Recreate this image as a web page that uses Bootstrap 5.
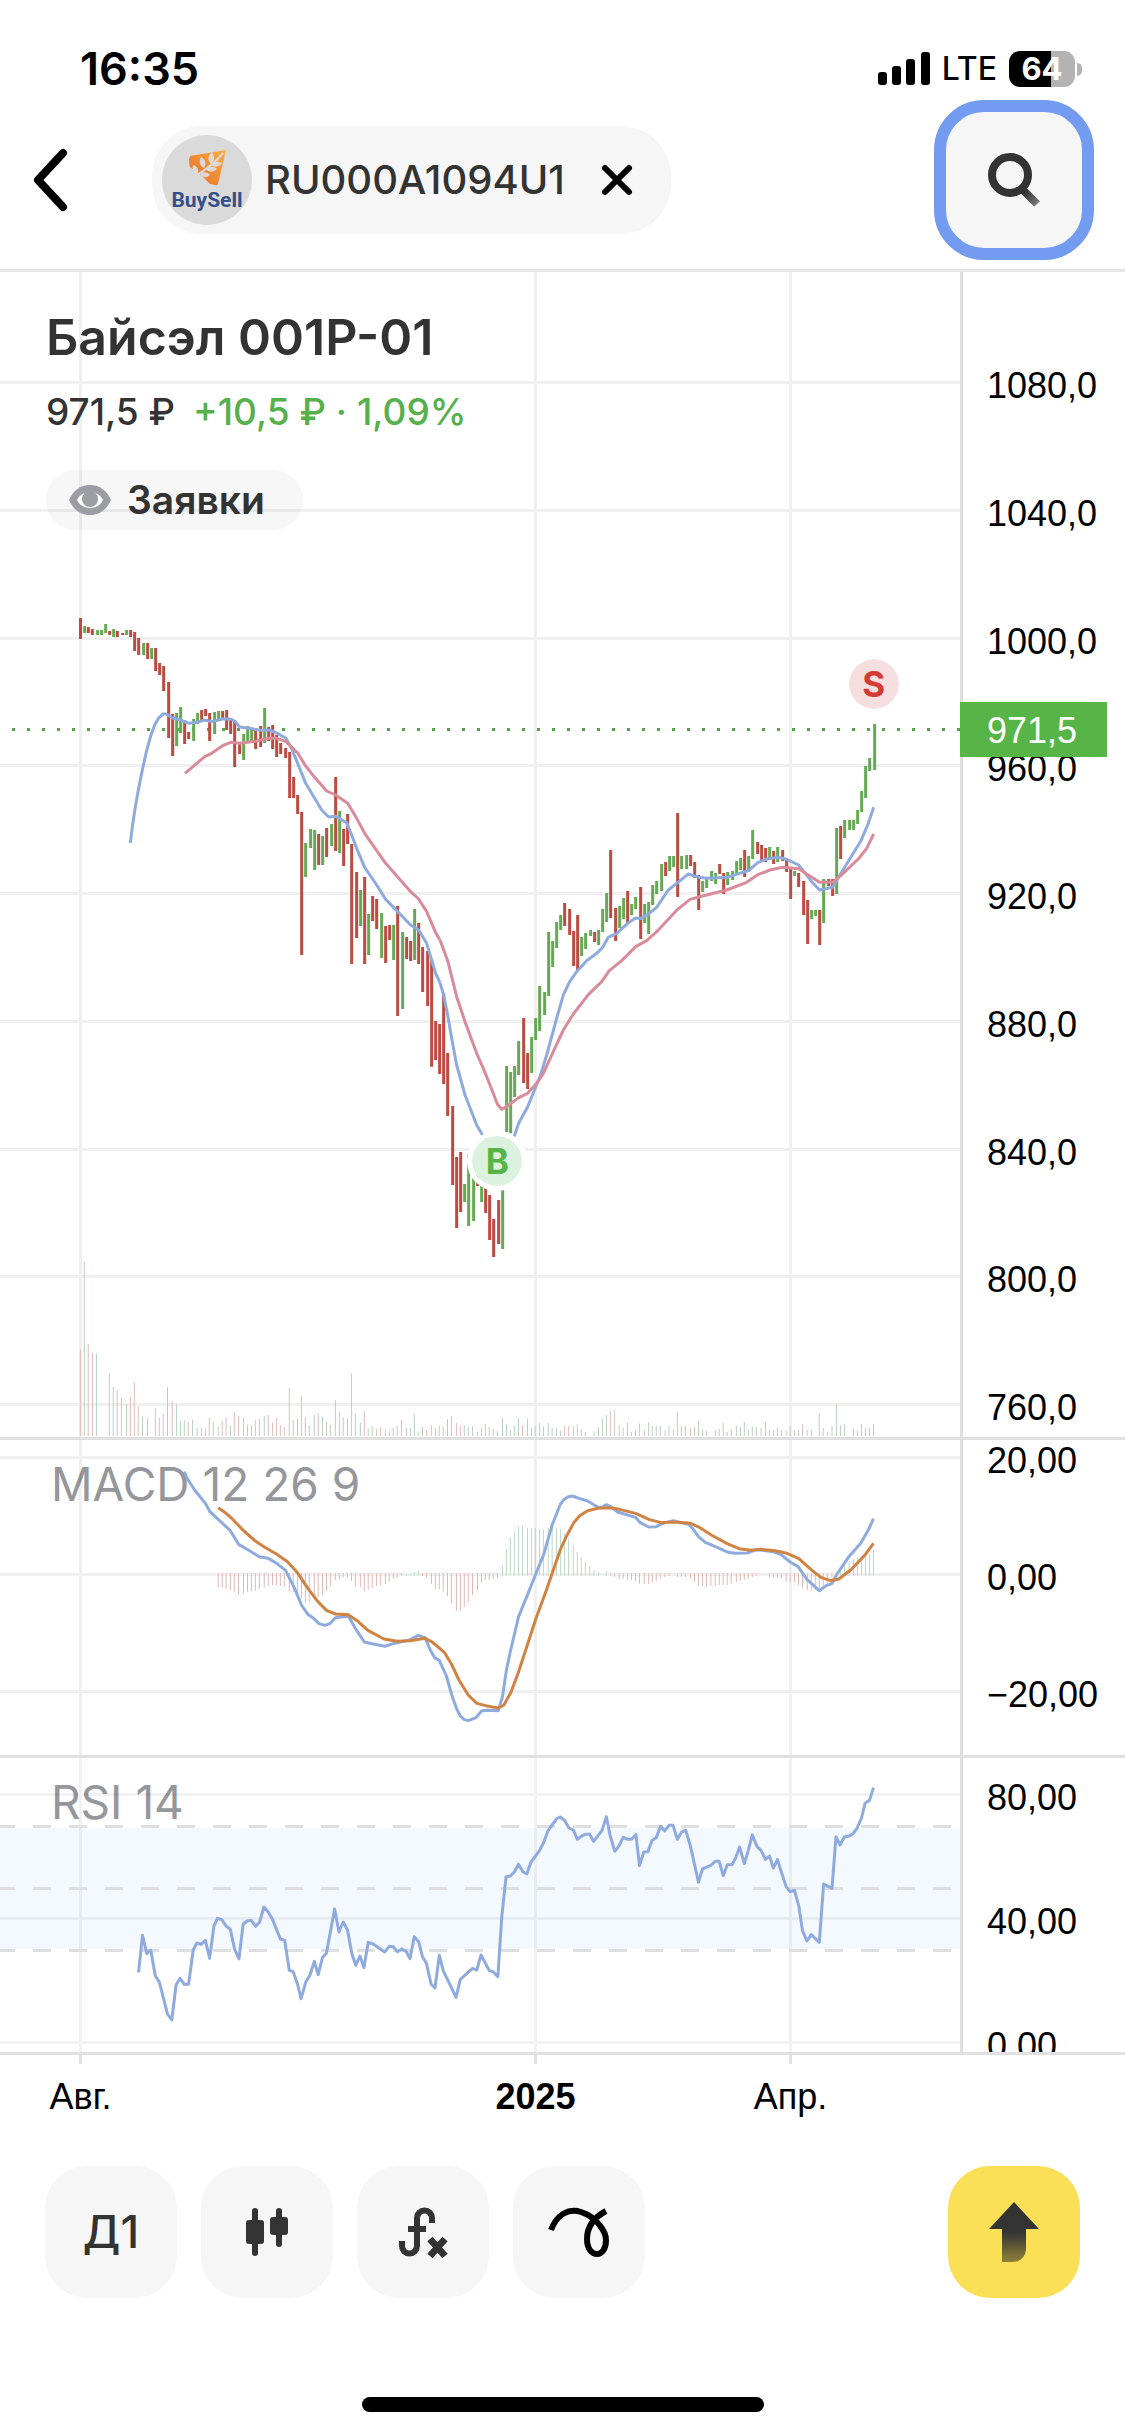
<!DOCTYPE html>
<html lang="ru">
<head>
<meta charset="utf-8">
<meta name="viewport" content="width=device-width, initial-scale=1">
<title>Байсэл 001P-01</title>
<link href="https://cdn.jsdelivr.net/npm/bootstrap@5.3.0/dist/css/bootstrap.min.css" rel="stylesheet">
<style>
  body { font-family: Inter, "Liberation Sans", sans-serif; color: #333; background: #fff; }
  button { border: 0; padding: 0; color: inherit; }
  .status-bar { height: 100px; padding: 38px 43px 0 80px; color: #000; }
  .clock { font-size: 45px; line-height: 52px; font-weight: 600; }
  .carrier { font-size: 32px; line-height: 44px; font-weight: 500; margin: 0 12px 0 12px; }
  .battery { width: 66px; height: 36px; border-radius: 11px; font-size: 31px; line-height: 36px; font-weight: 700; color: #fff;
    background: linear-gradient(90deg, #000 64%, #b3b3b3 64%); }
  .battery-tip { width: 5px; height: 13px; border-radius: 0 6px 6px 0; background: #b3b3b3; margin-left: 2px; }
  .top-bar { height: 172px; padding: 0 31px 9px; border-bottom: 3px solid #e6e6e6; }
  .back-btn { width: 72px; height: 108px; }
  .ticker { height: 108px; border-radius: 50px; background: #f6f6f6; margin-left: 49px; padding: 0 32px 0 10px; gap: 13px; }
  .ticker-name { font-size: 40px; line-height: 44px; font-weight: 500; }
  .logo-disc { width: 90px; height: 90px; }
  .clear-btn { width: 44px; height: 60px; margin-left: 17px; }
  .search-btn { width: 160px; height: 160px; border: 12px solid #739bf0; border-radius: 50px; background: #f6f6f6; }
  .plot { min-width: 0; }
  .plot > svg { display: block; }
  .plot > svg path { fill: none; vector-effect: non-scaling-stroke; }
  .pane { border-bottom: 3px solid #e0e0e0; }
  .pane-price { height: 1168px; }
  .pane-macd { height: 318px; }
  .pane-rsi { height: 297px; }
  .scale-col { width: 165px; border-left: 3px solid #dfdfdf; padding-left: 24px; font: 36px/40px "Liberation Sans", Arial, sans-serif; color: #000; }
  .pane-price .scale-col { padding-top: 94px; padding-bottom: 9px; }
  .pane-macd .scale-col { padding-top: 1px; padding-bottom: 40px; }
  .pane-rsi .scale-col { padding-top: 20px; }
  .scale-inner { height: 288px; }
  .price-tag { left: calc(100% - 165px); top: 430px; width: 147px; height: 55px; padding-left: 27px; background: #56b546; color: #fff; font: 36px/58px "Liberation Sans", Arial, sans-serif; }
  .info { left: 46px; top: 35px; }
  .info h1 { font-size: 50px; line-height: 60px; font-weight: 600; }
  .quote { font-size: 37px; line-height: 44px; font-weight: 500; gap: 18px; margin-top: 23px; }
  .up-text { color: #56b04b; }
  .orders-btn { height: 60px; border-radius: 30px; margin-top: 36px; padding: 0 38px 0 23px; gap: 16px; background: rgba(90,90,90,.05); font-size: 39px; line-height: 44px; font-weight: 600; }
  .pane-label { left: 51px; top: 16px; font-size: 46px; line-height: 56px; color: #95979c; }
  .deal { width: 60px; height: 60px; border: 5px solid #fff; border-radius: 50%; transform: translate(-50%, -50%); font-size: 35px; line-height: 50px; font-weight: 700; text-align: center; }
  .deal-sell { left: 91%; top: 412px; background: #f8dfdf; background-clip: padding-box; color: #d23c35; }
  .deal-buy { left: 51.8%; top: 889px; background: #dbf2de; background-clip: padding-box; color: #56b546; }
  .time-row { height: 111px; display: grid; grid-template-columns: 161fr 248fr 253fr 257fr 206fr; font: 36px/40px "Liberation Sans", Arial, sans-serif; color: #000; text-align: center; }
  .time-row span::before { content: ""; display: block; width: 3px; height: 9px; margin: 0 auto 13px; background: #e0e0e0; }
  .t-year { grid-column: 3; }
  .t-apr { grid-column: 4; }
  .tool-row { padding: 0 45px; gap: 24px; }
  .tool-btn { width: 132px; height: 132px; border-radius: 42px; background: #f6f6f6; font-size: 45px; font-weight: 500; }
  .send-btn { background: #fbdf57; }
  .home-bar { width: 402px; height: 15px; border-radius: 8px; background: #000; margin: 99px auto 24px; }
</style>
</head>
<body>
<header>
  <div class="status-bar d-flex align-items-center">
    <span class="clock me-auto">16:35</span>
    <svg width="52" height="34" viewBox="0 0 52 34" aria-hidden="true"><rect y="20" width="9" height="13" rx="3"/><rect x="14" y="14" width="9" height="19" rx="3"/><rect x="28" y="7" width="9" height="26" rx="3"/><rect x="43" width="9" height="33" rx="3"/></svg>
    <span class="carrier">LTE</span>
    <span class="battery text-center">64</span><span class="battery-tip"></span>
  </div>
  <div class="top-bar d-flex align-items-center">
    <button class="back-btn bg-transparent text-start" aria-label="Назад"><svg width="40" height="64" viewBox="0 0 40 64"><path d="M32 5 7 32l25 27" fill="none" stroke="#000" stroke-width="8" stroke-linecap="round" stroke-linejoin="round"/></svg></button>
    <div class="ticker d-flex align-items-center">
      <svg class="logo-disc" viewBox="0 0 90 90" role="img" aria-label="BuySell">
        <defs><linearGradient id="lg" x1="0" y1="1" x2="1" y2="0"><stop offset="0" stop-color="#e56a2c"/><stop offset="1" stop-color="#fbb03f"/></linearGradient></defs>
        <circle cx="45" cy="45" r="45" fill="#dadada"/>
        <path d="M28 21 64 15 56 49q-1 2-3 1L48 49 40 41 28 32q-2-6 0-11z" fill="url(#lg)"/>
        <path d="M35 40C43 35 52 29 61 18" stroke="#dedad6" stroke-width="2" fill="none"/>
        <path d="M49 29c-4-4-3-8 1-12 3 5 3 8-1 12zM42 33c-5-3-5-6-3-11 4 2 6 6 3 11zM36 38c-5-1-6-4-5-8 4 1 6 4 5 8zM49 30c3-4 7-4 11-2-3 4-7 5-11 2zM44 34c3-3 8-3 11 0-3 3-8 4-11 0zM38 39c3-3 8-2 10 1-3 3-7 3-10-1z" fill="#dedad6"/>
        <text x="45" y="72" text-anchor="middle" font-family="Roboto, sans-serif" font-weight="700" font-size="21" fill="#34508b">BuySell</text>
      </svg>
      <span class="ticker-name">RU000A1094U1</span>
      <button class="clear-btn bg-transparent" aria-label="Очистить"><svg width="34" height="34" viewBox="0 0 34 34"><path d="M5 5l24 24M29 5 5 29" stroke="#000" stroke-width="6" stroke-linecap="round"/></svg></button>
    </div>
    <button class="search-btn ms-auto" aria-label="Поиск"><svg width="60" height="60" viewBox="0 0 60 60"><defs><linearGradient id="sg" x1="0" y1="0" x2="1" y2="1"><stop offset=".2" stop-color="#333"/><stop offset="1" stop-color="#777"/></linearGradient></defs><path d="M38 39 53 54" stroke="url(#sg)" stroke-width="8"/><circle cx="26" cy="25" r="18" fill="none" stroke="#333" stroke-width="8"/></svg></button>
  </div>
</header>

<main>
  <section class="pane pane-price d-flex position-relative">
    <div class="plot flex-fill position-relative">
      <svg width="100%" height="1165" viewBox="0 272 960 1165" preserveAspectRatio="none">
        <path stroke="#000" stroke-opacity=".06" stroke-width="3" d="M80.5 272V1437M535.5 272V1437M790.5 272V1437M0 382.5H960M0 510.5H960M0 638.5H960M0 765.5H960M0 893.5H960M0 1021.5H960M0 1149.5H960M0 1276.5H960M0 1404.5H960"/>
        <g transform="translate(0 1200) scale(.35714 .33333)" stroke-width="1">
          <path stroke="#e3bcba" d="M225 708V447M247 708V432M259 708V459M306 708V520M328 708V570M340 708V594M365 708V590M376 708V548M387 708V620M413 708V655M435 708V625M446 708V654M457 708V642M469 708V561M482 708V603M527 708V665M564 708V684M575 708V686M586 708V654M622 708V662M633 708V652M656 708V636M668 708V648M715 708V660M726 708V656M751 708V645M763 708V668M774 708V654M785 708V675M796 708V682M810 708V564M821 708V660M833 708V655M844 708V588M891 708V639M914 708V666M939 708V600M961 708V651M973 708V655M984 708V521M1020 708V633M1042 708V678M1065 708V682M1079 708V689M1138 708V684M1194 708V690M1208 708V675M1230 708V677M1253 708V657M1264 708V648M1278 708V669M1289 708V677M1311 708V681M1359 708V672M1370 708V681M1381 708V687M1393 708V693M1463 708V675M1477 708V657"/>
          <path stroke="#b5d3bd" d="M236 708V186M270 708V461M317 708V561M354 708V612M399 708V650M494 708V612M505 708V663M516 708V660M539 708V659M552 708V682M597 708V663M611 708V680M645 708V676M682 708V652M693 708V674M704 708V675M740 708V648M855 708V651M866 708V676M880 708V645M903 708V650M925 708V675M950 708V636M995 708V642M1009 708V668M1031 708V685M1054 708V687M1090 708V694M1101 708V683M1112 708V678M1124 708V660M1149 708V684M1160 708V642M1171 708V695M1183 708V681M1219 708V684M1241 708V680M1300 708V675M1323 708V679M1337 708V695M1348 708V682M1407 708V654M1418 708V672M1429 708V690M1440 708V676M1452 708V655M1488 708V684M1499 708V680M1511 708V669M1522 708V679M1535 708V668M1546 708V684M1558 708V684"/>
        </g>
        <g transform="translate(500 1400) scale(.39857 .33333)" stroke-width="1">
          <path stroke="#dfc3c1" d="M162 108V78M172 108V78M184 108V78M194 108V72M277 108V33M287 108V30M299 108V75M350 108V70M362 108V90M414 108V90M435 108V87M478 108V84M488 108V80M518 108V93M655 108V84M686 108V90M718 108V90M739 108V92M759 108V72M771 108V90M821 108V96"/>
          <path stroke="#b9d0be" d="M152 108V92M204 108V87M214 108V96M236 108V93M247 108V82M257 108V56M267 108V45M309 108V84M320 108V68M330 108V96M340 108V90M373 108V66M382 108V78M392 108V78M402 108V78M424 108V78M445 108V37M455 108V78M465 108V78M498 108V63M508 108V90M540 108V90M550 108V87M560 108V69M570 108V96M580 108V87M593 108V78M603 108V81M613 108V66M623 108V90M633 108V80M643 108V80M666 108V66M676 108V90M696 108V84M706 108V90M728 108V78M749 108V90M781 108V90M801 108V42M811 108V84M833 108V78M844 108V12M854 108V75M864 108V72M887 108V87M897 108V92M907 108V72M917 108V84M927 108V84M937 108V72"/>
        </g>
        <path stroke="#56a24c" stroke-width="3" stroke-dasharray="3 12" d="M12 729.5H960"/>
        <g stroke-width="3">
          <g transform="translate(60 600) scale(.33333)">
            <path stroke="#bc4b41" d="M61.5 54V117M85 81V99M97 87V105M149 93V105M172 93V111M188 99V105M212 90V111M224 96V153M236 114V165M263 129V177M287 144V213M299 189V225M311 198V273M326 246V414M338 342V468M374 361V432M386 396V417M425 330V363M437 327V348M449 339V423M488 333V360M500 330V390M512 360V402M524 360V501M539 426V462M587 384V447M602 378V441M626 381V423M638 375V447M650 405V471M662 429V462M677 444V474M689 456V594M701 531V594M713 585V642M725 636V1065M776 702V795M800 684V771M827 531V753M851 687V798M863 642V732M875 732V1092M890 816V1014M914 831V1092M938 888V963M950 897V987M977 978V1089M989 975V1020M1013 918V1248M1040 1011V1077M1052 1023V1083M1076 969V1092M1088 1041V1176M1103 1053V1218M1115 1077V1400M1127 1263V1380"/>
            <path stroke="#66a955" d="M74 78V99M113 90V105M125 90V105M137 72V99M161 87V111M200 90V105M251 129V165M275 144V177M350 339V438M362 321V399M401 357V423M413 339V372M464 336V402M476 333V360M551 402V480M563 378V425M575 384V425M614 324V429M737 729V831M752 687V744M764 690V810M788 708V795M815 672V738M839 633V759M902 870V978M926 942V1065M965 939V1074M1001 975V1080M1028 996V1227M1064 927V1080"/>
          </g>
          <g transform="translate(440 840) scale(.33333)">
            <path stroke="#bc4b41" d="M-1 552V702M11 459V732M23 639V828M38 798V1035M50 951V1164M62 936V1116M113 1000V1038M137 1043V1119M149 1065V1200M161 1137V1251M176 1080V1212M251 534V729M263 639V747M374 189V258M389 207V285M401 273V378M413 225V390M464 276V306M512 30V234M527 204V303M563 153V249M602 141V297M677 66V108M713 -81V171M752 45V78M764 66V114M776 105V210M839 72V102M851 99V162M914 30V111M953 6V42M965 15V60M977 24V66M1001 33V72M1028 30V63M1040 60V96M1052 81V177M1076 99V141M1091 123V225M1103 180V312M1139 210V315M1166 117V138M1178 117V168M1202 -42V57"/>
            <path stroke="#66a955" d="M74 1032V1086M86 942V1158M101 1000V1143M125 1030V1086M188 1050V1227M200 678V876M212 696V880M224 678V771M236 603V705M275 591V699M287 534V600M299 438V573M314 456V525M326 276V468M338 303V381M350 246V324M362 225V270M425 291V348M437 279V327M452 270V288M476 270V315M488 207V276M500 159V246M539 198V264M551 174V237M575 192V225M587 171V207M614 192V249M626 186V282M638 135V195M650 123V162M665 72V153M689 48V93M701 48V81M725 48V87M740 45V87M788 123V156M800 117V144M815 93V123M827 99V132M863 96V135M878 93V120M890 63V102M902 54V90M926 48V93M938 -30V57M989 21V57M1013 21V66M1064 93V108M1115 210V237M1127 210V228M1151 117V249M1190 -36V162M1214 -60V-6M1229 -60V-30M1241 -60V-30M1253 -90V-48M1265 -147V-84M1277 -222V-126M1289 -246V-207M1304 -348V-210"/>
          </g>
        </g>
        <g stroke-width="3" stroke-linejoin="round">
          <g transform="translate(60 600) scale(.33333)">
            <path stroke="#8fabde" d="M211 729 217 680 226 620 236 565 248 505 260 452 272 408 284 375 296 354 311 341 323 344 338 354 362 360 386 370 410 367 434 360 455 365 488 357 512 357 524 363 539 381 563 384 600 391 629 390 650 399 677 414 695 445 713 490 737 550 764 595 785 630 806 651 827 649 860 668 875 705 890 745 914 802 950 855 977 898 1013 935 1052 975 1076 990 1100 1030 1127 1120 1140 1148"/>
            <path stroke="#d98b99" d="M375 520 434 470 455 460 488 437 512 427 539 430 587 424 626 415 650 415 677 424 713 459 737 498 764 532 800 573 827 585 863 610 890 655 914 700 977 790 1052 875 1076 897 1100 935 1127 998 1140 1020"/>
          </g>
          <g transform="translate(440 840) scale(.33333)">
            <path stroke="#8fabde" d="M0 428 11 465 23 525 35 595 50 675 75 765 110 855 127 884 165 925 185 925 223 888 236 850 263 800 300 710 320 645 350 535 370 465 389 425 410 395 440 362 470 340 488 322 505 292 530 280 563 250 587 234 602 235 625 222 650 202 685 150 713 128 745 102 776 112 800 115 860 112 926 92 953 68 980 57 1015 52 1040 58 1076 75 1115 125 1139 150 1178 142 1218 75 1263 2 1285 -50 1301 -98"/>
            <path stroke="#d98b99" d="M0 300 23 362 50 470 75 545 110 640 130 685 150 735 172 792 185 808 200 800 236 773 263 760 290 730 310 700 340 635 370 570 400 522 445 464 485 425 508 392 545 362 587 320 620 302 650 275 713 208 750 178 776 171 860 150 920 127 953 104 990 90 1028 82 1076 86 1115 112 1139 127 1178 127 1202 107 1255 57 1280 25 1301 -18"/>
          </g>
        </g>
      </svg>
      <span class="deal deal-sell position-absolute">S</span>
      <span class="deal deal-buy position-absolute">B</span>
      <div class="info position-absolute">
        <h1 class="mb-0">Байсэл 001P-01</h1>
        <div class="quote d-flex"><span>971,5 ₽</span><span class="up-text">+10,5 ₽ · 1,09%</span></div>
        <button class="orders-btn d-flex align-items-center"><svg width="42" height="30" viewBox="0 0 42 30"><path d="M21 0C11 0 4 6 0 15c4 9 11 15 21 15s17-6 21-15C38 6 31 0 21 0z" fill="#9b9da3"/><path d="M21 7C14 7 10 11 8 15c2 4 6 8 13 8s11-4 13-8C32 11 28 7 21 7z" fill="#fff"/><circle cx="21" cy="14" r="8" fill="#9b9da3"/></svg>Заявки</button>
      </div>
    </div>
    <div class="scale-col d-flex flex-column justify-content-between flex-shrink-0">
      <span>1080,0</span><span>1040,0</span><span>1000,0</span><span>960,0</span><span>920,0</span><span>880,0</span><span>840,0</span><span>800,0</span><span>760,0</span>
    </div>
    <span class="price-tag position-absolute">971,5</span>
  </section>

  <section class="pane pane-macd d-flex">
    <div class="plot flex-fill position-relative">
      <span class="pane-label position-absolute">MACD 12 26 9</span>
      <svg class="position-relative" width="100%" height="315" viewBox="0 1440 960 315" preserveAspectRatio="none">
        <path stroke="#000" stroke-opacity=".06" stroke-width="3" d="M80.5 1440V1755M535.5 1440V1755M790.5 1440V1755M0 1457.5H960M0 1574.5H960M0 1691.5H960"/>
        <g transform="translate(0 1420) scale(.35714 .33333)">
          <path stroke="#dfb9b7" d="M611 459V503M622 459V503M633 459V507M645 459V510M656 459V515M668 459V524M682 459V521M693 459V515M704 459V513M715 459V512M726 459V507M740 459V503M751 459V499M763 459V495M774 459V495M785 459V498M796 459V501M810 459V513M821 459V517M833 459V520M844 459V535M855 459V548M866 459V545M880 459V540M891 459V532M903 459V525M914 459V513M925 459V499M939 459V480M950 459V477M961 459V473M973 459V473M984 459V483M995 459V500M1009 459V503M1020 459V515M1031 459V510M1042 459V504M1054 459V498M1065 459V497M1079 459V492M1090 459V485M1101 459V477M1112 459V474M1124 459V467M1183 459V467M1194 459V474M1208 459V492M1219 459V507M1230 459V507M1241 459V515M1253 459V528M1264 459V551M1278 459V572M1289 459V573M1300 459V562M1311 459V547M1323 459V525M1337 459V510M1348 459V488M1359 459V480M1370 459V480M1381 459V477M1393 459V474"/>
          <path stroke="#bcd9c3" d="M1138 467V460M1149 467V460M1160 467V456M1171 467V450M1407 467V436M1418 467V387M1429 467V352M1440 467V332M1452 467V319M1463 467V318M1477 467V324M1488 467V324M1499 467V324M1511 467V328M1522 467V328M1535 467V324M1546 467V318M1558 467V325"/>
        </g>
        <g transform="translate(500 1400) scale(.39857 .33333)">
          <path stroke="#dfb9b7" d="M287 519V531M299 519V537M309 519V537M320 519V540M330 519V540M340 519V543M350 519V551M362 519V552M373 519V552M382 519V547M392 519V542M402 519V534M414 519V531M424 519V528M445 519V531M455 519V531M465 519V531M478 519V536M488 519V545M498 519V557M508 519V559M518 519V560M529 519V557M540 519V558M550 519V555M560 519V555M570 519V555M580 519V551M593 519V546M603 519V543M613 519V540M623 519V536M633 519V531M643 519V527M676 519V532M686 519V534M696 519V534M706 519V537M718 519V546M728 519V548M739 519V548M749 519V555M759 519V564M771 519V570M781 519V572M791 519V570M801 519V570M811 519V562M821 519V555M833 519V540"/>
          <path stroke="#bcd9c3" d="M152 527V387M162 527V400M172 527V415M184 527V435M194 527V456M204 527V471M214 527V486M225 527V498M236 527V510M247 527V517M267 527V512M277 527V518M844 527V515M854 527V505M864 527V495M876 527V483M887 527V477M897 527V473M907 527V468M917 527V465M927 527V463M937 527V450"/>
        </g>
        <g stroke-width="3" stroke-linejoin="round">
          <g transform="translate(0 1420) scale(.35714 .33333)">
            <path stroke="#8fabde" d="M516 155 525 177 545 210 575 250 588 275 611 298 645 332 668 373 700 393 726 410 751 415 775 430 800 452 825 505 844 555 862 583 878 595 893 611 910 616 925 610 939 593 961 590 975 588 995 625 1020 666 1045 672 1078 679 1100 671 1124 665 1149 659 1171 646 1190 653 1205 690 1217 713 1230 721 1250 768 1265 825 1278 865 1289 888 1300 899 1311 902 1333 893 1348 873 1362 871 1395 872 1407 830 1418 750 1430 690 1452 590 1475 530 1499 465 1522 405 1546 315 1568 255"/>
            <path stroke="#d08343" d="M611 263 633 280 650 296 682 332 715 363 740 381 774 402 805 425 833 458 862 505 890 545 915 572 940 582 975 584 1000 602 1030 631 1075 657 1112 664 1149 662 1190 655 1210 666 1245 698 1264 732 1285 780 1311 825 1335 850 1360 857 1395 864 1411 855 1430 818 1450 762 1475 680 1500 598 1530 510 1568 392"/>
          </g>
          <g transform="translate(500 1400) scale(.39857 .33333)">
            <path stroke="#8fabde" d="M150 315 160 299 170 291 182 288 200 296 220 303 245 321 255 322 267 314 278 320 295 336 340 352 352 368 373 381 392 380 408 370 435 362 455 368 473 373 485 388 498 410 515 427 545 442 570 456 588 460 620 459 640 450 655 450 685 455 705 464 728 486 748 500 770 538 801 572 820 556 833 551 844 525 874 472 905 430 925 388 937 356"/>
            <path stroke="#d08343" d="M150 453 165 413 185 368 200 347 220 332 245 325 275 323 300 328 340 340 375 359 405 368 435 366 478 370 500 382 530 405 570 431 600 446 630 451 655 448 690 452 720 460 750 476 780 508 805 532 830 542 850 537 880 510 915 466 937 430"/>
          </g>
        </g>
      </svg>
    </div>
    <div class="scale-col d-flex flex-column justify-content-between flex-shrink-0">
      <span>20,00</span><span>0,00</span><span>−20,00</span>
    </div>
  </section>

  <section class="pane pane-rsi d-flex overflow-hidden">
    <div class="plot flex-fill position-relative">
      <span class="pane-label position-absolute">RSI 14</span>
      <svg class="position-relative" width="100%" height="294" viewBox="0 1758 960 294" preserveAspectRatio="none">
        <rect y="1828" width="960" height="121" fill="#4c8cf8" fill-opacity=".06"/>
        <path stroke="#000" stroke-opacity=".05" stroke-width="3" d="M80.5 1758V2052M535.5 1758V2052M790.5 1758V2052M0 1794.5H960M0 1918.5H960M0 2042.5H960"/>
        <path stroke="#dedfe1" stroke-width="3" stroke-dasharray="18 18" stroke-dashoffset="3" d="M0 1826.5H955M0 1888.5H955M0 1950.5H955"/>
        <g stroke="#8fabde" stroke-width="3" stroke-linejoin="round">
          <path transform="translate(0 1740) scale(.35714 .33333)" d="M388 697 399 586 411 641 422 630 435 708 446 726 469 822 481 840 493 735 504 715 516 733 528 733 541 630 551 609 563 613 575 601 587 655 599 558 609 535 621 539 633 558 645 568 657 628 669 657 681 552 692 543 703 541 716 559 727 546 739 501 751 516 763 538 785 597 797 601 810 691 821 695 833 732 843 776 856 727 868 705 880 664 891 704 903 652 914 640 937 507 949 576 961 546 973 570 985 640 996 676 1008 648 1019 683 1031 607 1045 612 1077 636 1090 619 1101 620 1113 635 1125 627 1137 634 1148 656 1160 590 1172 605 1183 650 1194 670 1207 732 1218 744 1230 646 1241 692 1277 772 1289 718 1323 685 1335 690 1347 645 1370 692 1381 695 1394 710 1405 530 1417 411 1429 408 1440 396 1452 373 1464 395 1475 402 1487 366 1511 331 1522 308 1535 271 1558 237"/>
          <path transform="translate(500 1740) scale(.39857 .33333)" d="M140 237 151 231 162 241 173 264 184 270 194 298 204 289 214 283 225 283 235 304 256 271 267 230 276 285 288 334 299 317 309 292 320 298 330 298 341 284 350 377 361 336 371 335 381 302 392 293 403 259 413 273 424 256 434 256 445 298 456 276 466 271 478 319 498 427 508 387 529 376 540 364 550 364 560 407 570 374 582 374 592 352 601 321 613 371 623 331 633 285 645 320 655 331 666 358 676 348 686 384 696 359 718 440 728 455 739 451 750 500 759 572 770 603 781 584 801 607 812 432 833 445 843 290 853 315 864 291 876 288 886 281 896 264 907 234 916 190 927 181 937 143"/>
        </g>
      </svg>
    </div>
    <div class="scale-col flex-shrink-0">
      <div class="scale-inner d-flex flex-column justify-content-between"><span>80,00</span><span>40,00</span><span>0,00</span></div>
    </div>
  </section>

  <div class="time-row">
    <span>Авг.</span><span class="t-year fw-bold">2025</span><span class="t-apr">Апр.</span>
  </div>
</main>

<footer>
  <div class="tool-row d-flex">
    <button class="tool-btn">Д1</button>
    <button class="tool-btn" aria-label="Тип графика"><svg width="132" height="132" viewBox="0 0 132 132"><g fill="#333"><rect x="45" y="54" width="18" height="24" rx="3"/><rect x="51" y="42" width="6" height="48" rx="3"/><rect x="69" y="51" width="18" height="18" rx="3"/><rect x="75" y="42" width="6" height="39" rx="3"/></g></svg></button>
    <button class="tool-btn" aria-label="Индикаторы"><svg width="132" height="132" viewBox="0 0 132 132"><g fill="none" stroke="#333" stroke-width="6"><path d="M75 57v-5a7.500 7.500 0 0 0-15 0v28a7.500 7.500 0 0 1-15 0v-5M51 63h18"/><path d="M73 73l15 17M88 73 73 90" stroke-width="7"/></g></svg></button>
    <button class="tool-btn" aria-label="Рисование"><svg width="132" height="132" viewBox="0 0 132 132"><path d="M38 64C44 48 56 42 68 46 84 51 93 66 93 74c0 9-4 14-9 14s-10-5-10-15C74 62 80 52 93 45" fill="none" stroke="#000" stroke-width="6"/></svg></button>
    <button class="tool-btn send-btn ms-auto" aria-label="Заявка"><svg width="132" height="132" viewBox="0 0 132 132"><defs><linearGradient id="ag" x1="0" y1="0" x2="0" y2="1"><stop offset=".5" stop-color="#333"/><stop offset="1" stop-color="#8f8138"/></linearGradient></defs><path d="M66 36 91 63H78V82c0 8-5 14-13 14H54V63H41z" fill="url(#ag)"/></svg></button>
  </div>
  <div class="home-bar"></div>
</footer>
<script src="https://cdn.jsdelivr.net/npm/bootstrap@5.3.0/dist/js/bootstrap.bundle.min.js"></script>
</body>
</html>
